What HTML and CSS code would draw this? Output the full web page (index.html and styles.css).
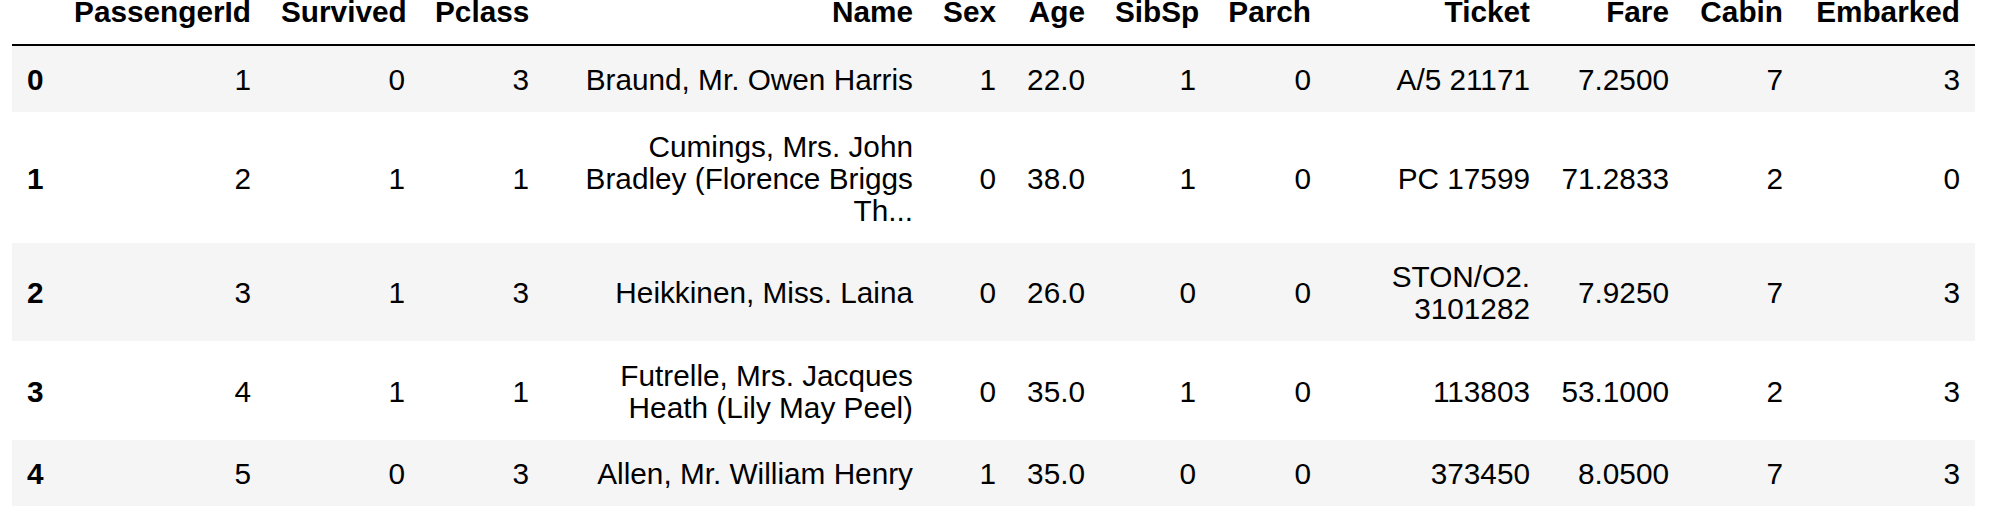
FILE: index.html
```html
<!DOCTYPE html>
<html>
<head>
<meta charset="utf-8">
<link rel="stylesheet" href="styles.css">
</head>
<body>
<div class="output">
<table class="dataframe">
  <colgroup>
    <col class="c-idx"><col class="c-pid"><col class="c-surv"><col class="c-pclass"><col class="c-name"><col class="c-sex"><col class="c-age"><col class="c-sibsp"><col class="c-parch"><col class="c-ticket"><col class="c-fare"><col class="c-cabin"><col class="c-emb">
  </colgroup>
  <thead>
    <tr>
      <th></th>
      <th>PassengerId</th>
      <th>Survived</th>
      <th>Pclass</th>
      <th>Name</th>
      <th>Sex</th>
      <th>Age</th>
      <th>SibSp</th>
      <th>Parch</th>
      <th>Ticket</th>
      <th>Fare</th>
      <th>Cabin</th>
      <th>Embarked</th>
    </tr>
  </thead>
  <tbody>
    <tr>
      <th>0</th><td>1</td><td>0</td><td>3</td><td>Braund, Mr. Owen Harris</td><td>1</td><td>22.0</td><td>1</td><td>0</td><td>A/5 21171</td><td>7.2500</td><td>7</td><td>3</td>
    </tr>
    <tr>
      <th>1</th><td>2</td><td>1</td><td>1</td><td>Cumings, Mrs. John Bradley (Florence Briggs Th...</td><td>0</td><td>38.0</td><td>1</td><td>0</td><td>PC 17599</td><td>71.2833</td><td>2</td><td>0</td>
    </tr>
    <tr>
      <th>2</th><td>3</td><td>1</td><td>3</td><td>Heikkinen, Miss. Laina</td><td>0</td><td>26.0</td><td>0</td><td>0</td><td>STON/O2. 3101282</td><td>7.9250</td><td>7</td><td>3</td>
    </tr>
    <tr>
      <th>3</th><td>4</td><td>1</td><td>1</td><td>Futrelle, Mrs. Jacques Heath (Lily May Peel)</td><td>0</td><td>35.0</td><td>1</td><td>0</td><td>113803</td><td>53.1000</td><td>2</td><td>3</td>
    </tr>
    <tr>
      <th>4</th><td>5</td><td>0</td><td>3</td><td>Allen, Mr. William Henry</td><td>1</td><td>35.0</td><td>0</td><td>0</td><td>373450</td><td>8.0500</td><td>7</td><td>3</td>
    </tr>
  </tbody>
</table>
</div>
</body>
</html>
```
FILE: styles.css
```css
html, body {
  margin: 0;
  padding: 0;
  background: #ffffff;
}

.output {
  padding-left: 12px;
}

.dataframe {
  border-collapse: collapse;
  border-spacing: 0;
  table-layout: fixed;
  width: 1963px;
  font-family: "Liberation Sans", Arial, Helvetica, sans-serif;
  font-size: 29.75px;
  line-height: 32px;
  color: #000;
}

.c-idx { width: 47px; }
.c-pid { width: 207px; }
.c-surv { width: 154px; }
.c-pclass { width: 124px; }
.c-name { width: 384px; }
.c-sex { width: 83px; }
.c-age { width: 89px; }
.c-sibsp { width: 111px; }
.c-parch { width: 115px; }
.c-ticket { width: 219px; }
.c-fare { width: 139px; }
.c-cabin { width: 114px; }
.c-emb { width: 177px; }

.dataframe thead th {
  font-weight: bold;
  text-align: right;
  vertical-align: bottom;
  line-height: 24px;
  padding: 0 15px 19.5px 15px;
  border-bottom: 2px solid #000;
  white-space: nowrap;
}

.dataframe td,
.dataframe tbody th {
  padding: 18.5px 15px 16px 15px;
  text-align: right;
  vertical-align: middle;
  font-weight: normal;
}

.dataframe tbody th {
  text-align: left;
  font-weight: bold;
}

.dataframe tbody tr:nth-child(odd) {
  background: #f5f5f5;
}
```
